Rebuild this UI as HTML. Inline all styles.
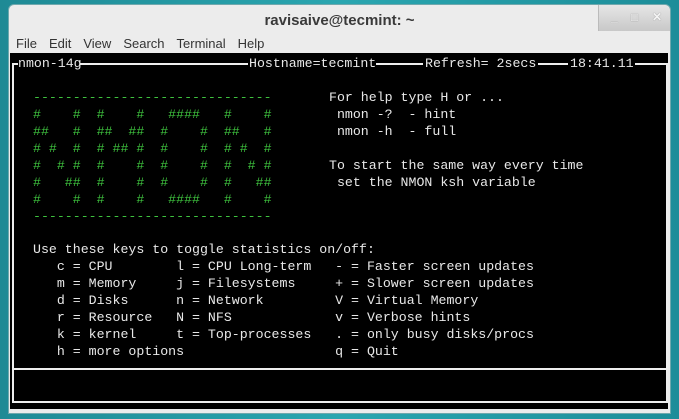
<!DOCTYPE html>
<html><head><meta charset="utf-8"><style>
*{margin:0;padding:0;box-sizing:border-box}
body{width:679px;height:419px;overflow:hidden;background:linear-gradient(90deg,#1f8a95,#2aa6b0 50%,#1d8d99);position:relative;font-family:"Liberation Sans",sans-serif}
.win{position:absolute;left:8px;top:4px;width:663px;height:410px;background:#ececec;border-radius:6px 6px 0 0;border:1px solid #6fa8ad}
.title{position:absolute;left:0;right:0;top:7px;text-align:center;font-weight:bold;font-size:15px;color:#3a3a3a}
.btns{position:absolute;right:0;top:0;width:72px;height:26px;background:linear-gradient(#e6e6e6,#c8c8c8);border-left:1px solid #bbb;border-radius:0 6px 0 0;color:#f4f4f4;font-size:12px;font-weight:bold}
.btns span{position:absolute;top:5px;text-shadow:0 0 1px #777}
.menu{position:absolute;left:7px;top:31px;font-size:13px;color:#333;word-spacing:0}
.menu span{margin-right:12px}
.term{position:absolute;width:658px;height:356px;background:#000}
.t{position:absolute;font-family:"Liberation Mono",monospace;font-size:13.25px;color:#e8e8e8;white-space:pre;line-height:17px}
.g{color:#3ec23e}
.hl{position:absolute;background:#eee;height:2px}
.vl{position:absolute;background:#eee;width:2px}
</style></head><body>
<div class="win">
<div class="title">ravisaive@tecmint: ~</div>
<div class="btns"><span style="left:12px">_</span><span style="left:32px">□</span><span style="left:53px">✕</span></div>
<div class="menu"><span>File</span><span>Edit</span><span>View</span><span>Search</span><span>Terminal</span><span>Help</span></div>
</div>
<div class="term" style="left:10px;top:53px"></div>
<div class="hl" style="left:12px;top:63px;width:6px"></div>
<div class="hl" style="left:80px;top:63px;width:168px"></div>
<div class="hl" style="left:376px;top:63px;width:47px"></div>
<div class="hl" style="left:538px;top:63px;width:30px"></div>
<div class="hl" style="left:635px;top:63px;width:34px"></div>
<div class="vl" style="left:12px;top:63px;height:340px"></div>
<div class="vl" style="left:666px;top:63px;height:340px"></div>
<div class="hl" style="left:12px;top:368px;width:656px"></div>
<div class="hl" style="left:12px;top:401px;width:656px"></div>
<div class="t" style="left:18px;top:55px">nmon-14g</div>
<div class="t" style="left:249px;top:55px">Hostname=tecmint</div>
<div class="t" style="left:425px;top:55px">Refresh= 2secs</div>
<div class="t" style="left:570px;top:55px">18:41.11</div>
<div class="t g" style="left:33px;top:89px">------------------------------
#    #  #    #   ####   #    #
##   #  ##  ##  #    #  ##   #
# #  #  # ## #  #    #  # #  #
#  # #  #    #  #    #  #  # #
#   ##  #    #  #    #  #   ##
#    #  #    #   ####   #    #
------------------------------</div>
<div class="t" style="left:329px;top:89px">For help type H or ...
 nmon -?  - hint
 nmon -h  - full

To start the same way every time
 set the NMON ksh variable</div>
<div class="t" style="left:33px;top:241px">Use these keys to toggle statistics on/off:
   c = CPU        l = CPU Long-term   - = Faster screen updates
   m = Memory     j = Filesystems     + = Slower screen updates
   d = Disks      n = Network         V = Virtual Memory
   r = Resource   N = NFS             v = Verbose hints
   k = kernel     t = Top-processes   . = only busy disks/procs
   h = more options                   q = Quit</div>
</body></html>
